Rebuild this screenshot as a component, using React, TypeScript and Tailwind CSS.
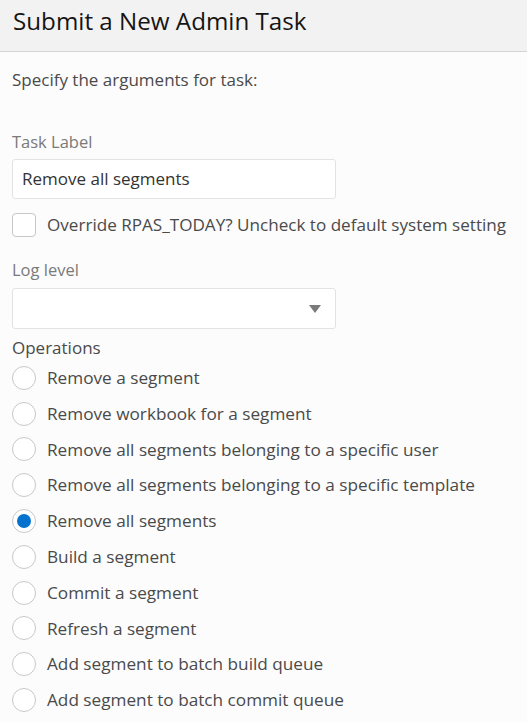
import React from "react";

const ops = [
  "Remove a segment",
  "Remove workbook for a segment",
  "Remove all segments belonging to a specific user",
  "Remove all segments belonging to a specific template",
  "Remove all segments",
  "Build a segment",
  "Commit a segment",
  "Refresh a segment",
  "Add segment to batch build queue",
  "Add segment to batch commit queue",
];

export default function App() {
  return (
    <div className="w-[527px] h-[722px] bg-[#fcfcfc] overflow-hidden" style={{ fontFamily: '"Open Sans", "Noto Sans", sans-serif' }}>
      <div className="h-[52px] bg-[#f2f2f2] border-b border-[#d4d4d4] flex items-center px-[13px]">
        <h1 className="text-[24.2px] text-[#161513] leading-none pb-[9px]">Submit a New Admin Task</h1>
      </div>
      <div className="px-[12px]">
        <p className="mt-[16px] text-[17px] text-[#4a4a4a] leading-[24px]">Specify the arguments for task:</p>
        <div className="mt-[38px] text-[16.5px] text-[#7a7a7a] leading-[24px]">Task Label</div>
        <div className="mt-[5px] w-[324px] h-[40px] border border-[#e3e3e3] bg-white rounded-[3px] flex items-center px-[9px] text-[17px] text-[#333]">Remove all segments</div>
        <div className="mt-[14px] flex items-center h-[24px]">
          <div className="w-[24px] h-[24px] border border-[#c8c8c8] rounded-[4px] bg-white"></div>
          <span className="ml-[11px] text-[17.1px] text-[#4a4a4a]">Override RPAS_TODAY? Uncheck to default system setting</span>
        </div>
        <div className="mt-[21px] text-[16.5px] text-[#7a7a7a] leading-[24px]">Log level</div>
        <div className="mt-[6px] w-[324px] h-[41px] border border-[#e3e3e3] bg-white rounded-[3px] flex items-center justify-end pr-[14px]">
          <svg width="12" height="8" viewBox="0 0 12 8"><path d="M0 0 L12 0 L6 8 Z" fill="#7b7b7b" /></svg>
        </div>
        <div className="mt-[7px] text-[17px] text-[#4a4a4a] leading-[24px]">Operations</div>
        <div className="flex flex-col">
          {ops.map((o, i) => (
            <div key={o} className="flex items-center h-[35.8px]">
              <div className="w-[24px] h-[24px] rounded-full border border-[#c8c8c8] bg-white flex items-center justify-center">
                {i === 4 && <div className="w-[14px] h-[14px] rounded-full bg-[#0572ce]"></div>}
              </div>
              <span className="ml-[11px] text-[17.2px] text-[#4a4a4a]">{o}</span>
            </div>
          ))}
        </div>
      </div>
    </div>
  );
}
